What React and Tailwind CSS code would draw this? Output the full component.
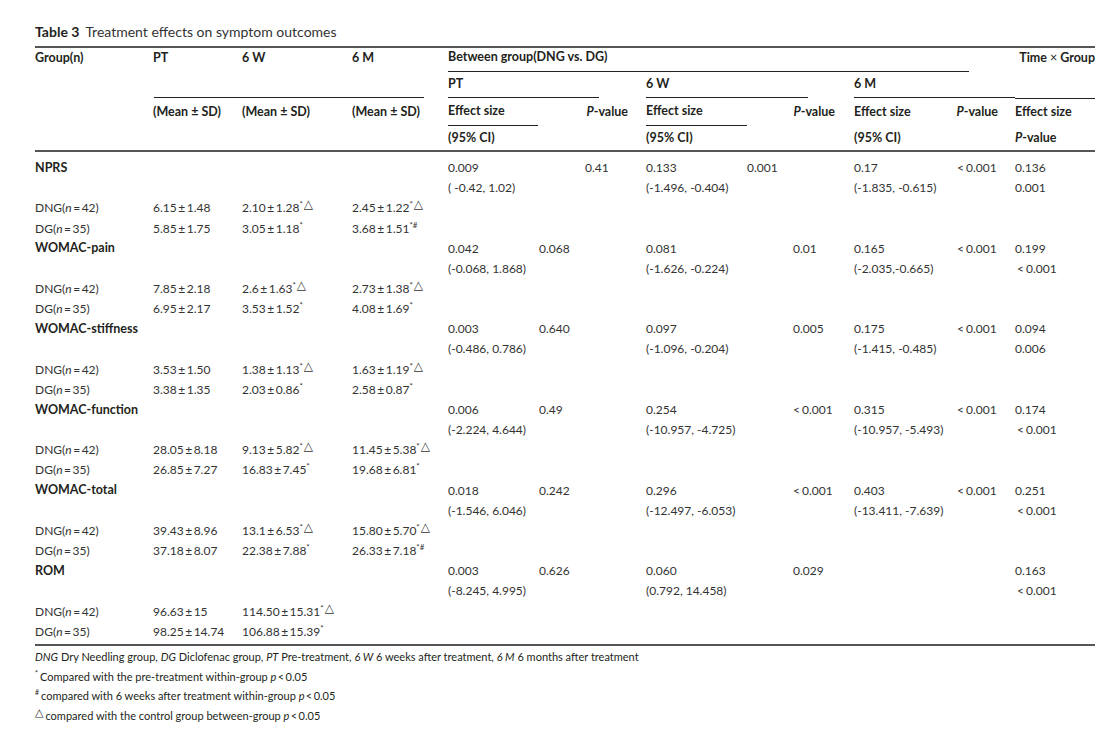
import React from "react";

const G =
  "grid grid-cols-[118px_89px_110px_96px_91px_46px_61px_101px_46px_61px_101px_60px_80px]";

function Sup({ s }) {
  if (!s) return null;
  return (
    <span className="inline-flex items-start">
      {s.split("").map((c, i) =>
        c === "△" ? (
          <span
            key={i}
            className="relative -top-[7px] ml-[1px] text-[12px] leading-none font-['DejaVu_Sans',sans-serif]"
          >
            △
          </span>
        ) : (
          <span key={i} className="relative -top-[5px] text-[8px] leading-none">
            {c}
          </span>
        )
      )}
    </span>
  );
}

function Lt({ v }) {
  if (v && v.startsWith("<")) {
    return (
      <span>
        {"<"}
        <span className="ml-[2px]">{v.slice(1)}</span>
      </span>
    );
  }
  return <span>{v}</span>;
}

const pm = (a, b) => `${a}\u2009±\u2009${b}`;

const cats = [
  {
    name: "NPRS",
    pt: ["0.009", "( -0.42, 1.02)"],
    ptP: "0.41",
    ptPc: "col-start-7",
    w: ["0.133", "(-1.496, -0.404)"],
    wP: "0.001",
    wPc: "col-start-9",
    m: ["0.17", "(-1.835, -0.615)"],
    mP: "<0.001",
    t: ["0.136", "0.001"],
    dng: [pm("6.15", "1.48"), [pm("2.10", "1.28"), "*△"], [pm("2.45", "1.22"), "*△"]],
    dg: [pm("5.85", "1.75"), [pm("3.05", "1.18"), "*"], [pm("3.68", "1.51"), "*#"]],
  },
  {
    name: "WOMAC-pain",
    pt: ["0.042", "(-0.068, 1.868)"],
    ptP: "0.068",
    ptPc: "col-start-6",
    w: ["0.081", "(-1.626, -0.224)"],
    wP: "0.01",
    wPc: "col-start-10",
    m: ["0.165", "(-2.035,-0.665)"],
    mP: "<0.001",
    t: ["0.199", "<0.001"],
    dng: [pm("7.85", "2.18"), [pm("2.6", "1.63"), "*△"], [pm("2.73", "1.38"), "*△"]],
    dg: [pm("6.95", "2.17"), [pm("3.53", "1.52"), "*"], [pm("4.08", "1.69"), "*"]],
  },
  {
    name: "WOMAC-stiffness",
    pt: ["0.003", "(-0.486, 0.786)"],
    ptP: "0.640",
    ptPc: "col-start-6",
    w: ["0.097", "(-1.096, -0.204)"],
    wP: "0.005",
    wPc: "col-start-10",
    m: ["0.175", "(-1.415, -0.485)"],
    mP: "<0.001",
    t: ["0.094", "0.006"],
    dng: [pm("3.53", "1.50"), [pm("1.38", "1.13"), "*△"], [pm("1.63", "1.19"), "*△"]],
    dg: [pm("3.38", "1.35"), [pm("2.03", "0.86"), "*"], [pm("2.58", "0.87"), "*"]],
  },
  {
    name: "WOMAC-function",
    pt: ["0.006", "(-2.224, 4.644)"],
    ptP: "0.49",
    ptPc: "col-start-6",
    w: ["0.254", "(-10.957, -4.725)"],
    wP: "<0.001",
    wPc: "col-start-10",
    m: ["0.315", "(-10.957, -5.493)"],
    mP: "<0.001",
    t: ["0.174", "<0.001"],
    dng: [pm("28.05", "8.18"), [pm("9.13", "5.82"), "*△"], [pm("11.45", "5.38"), "*△"]],
    dg: [pm("26.85", "7.27"), [pm("16.83", "7.45"), "*"], [pm("19.68", "6.81"), "*"]],
  },
  {
    name: "WOMAC-total",
    pt: ["0.018", "(-1.546, 6.046)"],
    ptP: "0.242",
    ptPc: "col-start-6",
    w: ["0.296", "(-12.497, -6.053)"],
    wP: "<0.001",
    wPc: "col-start-10",
    m: ["0.403", "(-13.411, -7.639)"],
    mP: "<0.001",
    t: ["0.251", "<0.001"],
    dng: [pm("39.43", "8.96"), [pm("13.1", "6.53"), "*△"], [pm("15.80", "5.70"), "*△"]],
    dg: [pm("37.18", "8.07"), [pm("22.38", "7.88"), "*"], [pm("26.33", "7.18"), "*#"]],
  },
  {
    name: "ROM",
    pt: ["0.003", "(-8.245, 4.995)"],
    ptP: "0.626",
    ptPc: "col-start-6",
    w: ["0.060", "(0.792, 14.458)"],
    wP: "0.029",
    wPc: "col-start-10",
    m: null,
    mP: null,
    t: ["0.163", "<0.001"],
    dng: [pm("96.63", "15"), [pm("114.50", "15.31"), "*△"], null],
    dg: [pm("98.25", "14.74"), [pm("106.88", "15.39"), "*"], null],
  },
];

const ROW = G + " h-[20.17px] items-center text-[12px] text-[#333] whitespace-nowrap";

function GroupLabel({ g, n }) {
  return (
    <span>
      {g}(<i>n</i>
      {"\u2009=\u2009"}
      {n})
    </span>
  );
}

function MeanRow({ label, n, vals }) {
  return (
    <div className={ROW}>
      <div className="col-start-1">
        <GroupLabel g={label} n={n} />
      </div>
      <div className="col-start-2">{vals[0]}</div>
      <div className="col-start-3">
        {vals[1] && (
          <span>
            {vals[1][0]}
            <Sup s={vals[1][1]} />
          </span>
        )}
      </div>
      <div className="col-start-4">
        {vals[2] && (
          <span>
            {vals[2][0]}
            <Sup s={vals[2][1]} />
          </span>
        )}
      </div>
    </div>
  );
}

function Category({ c }) {
  return (
    <>
      <div className={ROW}>
        <div className="col-start-1 font-bold text-[12.5px] text-[#231f20]">{c.name}</div>
        <div className="col-start-5">{c.pt[0]}</div>
        <div className={c.ptPc}>{c.ptP}</div>
        <div className="col-start-8">{c.w[0]}</div>
        <div className={c.wPc}>
          <Lt v={c.wP} />
        </div>
        {c.m && <div className="col-start-11">{c.m[0]}</div>}
        {c.mP && (
          <div className="col-start-12 pl-[2px]">
            <Lt v={c.mP} />
          </div>
        )}
        <div className="col-start-13">{c.t[0]}</div>
      </div>
      <div className={ROW}>
        <div className="col-start-5">{c.pt[1]}</div>
        <div className="col-start-8">{c.w[1]}</div>
        {c.m && <div className="col-start-11">{c.m[1]}</div>}
        <div className={"col-start-13" + (c.t[1].startsWith("<") ? " pl-[2px]" : "")}>
          <Lt v={c.t[1]} />
        </div>
      </div>
      <MeanRow label="DNG" n="42" vals={c.dng} />
      <MeanRow label="DG" n="35" vals={c.dg} />
    </>
  );
}

export default function App() {
  return (
    <div className="w-[1107px] h-[733px] overflow-hidden bg-white text-[#231f20] font-['Lato','Liberation_Sans',sans-serif]">
      <div className="ml-[35px] w-[1060px] pt-[22px]">
        <div className="h-[18px] flex items-center text-[14px] whitespace-nowrap">
          <span className="font-bold">Table 3</span>
          <span className="ml-[6px] text-[#333]">Treatment effects on symptom outcomes</span>
        </div>
        <div className="mt-[6px] border-t-2 border-[#555]" />

        {/* header row 1 */}
        <div className={G + " h-[24px] text-[12.5px] font-bold whitespace-nowrap"}>
          <div className="col-start-1 flex items-center pb-[4px]">Group(n)</div>
          <div className="col-start-2 flex items-center pb-[4px]">PT</div>
          <div className="col-start-3 flex items-center pb-[4px]">6 W</div>
          <div className="col-start-4 flex items-center pb-[4px]">6 M</div>
          <div className="col-start-5 col-span-8">
            <div className="w-[521px] h-full border-b border-[#222] flex items-center pb-[4px]">
              Between group(DNG vs. DG)
            </div>
          </div>
          <div className="col-start-13 flex items-center justify-end pb-[4px]">
            Time <span className="font-normal mx-[3px]">×</span> Group
          </div>
        </div>

        {/* header row 2 */}
        <div className={G + " h-[26px] text-[12.5px] font-bold whitespace-nowrap"}>
          <div className="col-start-2 col-span-3">
            <div className="ml-[1px] w-[270px] h-full border-b border-[#222]" />
          </div>
          <div className="col-start-5 col-span-3">
            <div className="w-[151px] h-full border-b border-[#222] flex items-center">PT</div>
          </div>
          <div className="col-start-8 col-span-3">
            <div className="w-[162px] h-full border-b border-[#222] flex items-center">6 W</div>
          </div>
          <div className="col-start-11 col-span-2 border-b border-[#222] flex items-center">6 M</div>
          <div className="col-start-13 border-b border-[#222] translate-y-[1px]" />
        </div>

        {/* header row 3 */}
        <div className={G + " h-[28px] text-[12.5px] font-bold whitespace-nowrap"}>
          <div className="col-start-2 flex items-center">(Mean ± SD)</div>
          <div className="col-start-3 flex items-center">(Mean ± SD)</div>
          <div className="col-start-4 flex items-center">(Mean ± SD)</div>
          <div className="col-start-5">
            <div className="w-[90px] h-full border-b border-[#222] flex items-center">Effect size</div>
          </div>
          <div className="col-start-6 col-span-2 flex items-center justify-end pr-[18px]">
            <i>P</i>-value
          </div>
          <div className="col-start-8 border-b border-[#222] flex items-center">Effect size</div>
          <div className="col-start-9 col-span-2 flex items-center justify-end pr-[19px]">
            <i>P</i>-value
          </div>
          <div className="col-start-11 flex items-center">Effect size</div>
          <div className="col-start-12 flex items-center justify-end pr-[17px]">
            <i>P</i>-value
          </div>
          <div className="col-start-13 flex items-center">Effect size</div>
        </div>

        {/* header row 4 */}
        <div className={G + " h-[24px] text-[12.5px] font-bold whitespace-nowrap items-center"}>
          <div className="col-start-5">(95% CI)</div>
          <div className="col-start-8">(95% CI)</div>
          <div className="col-start-11">(95% CI)</div>
          <div className="col-start-13">
            <i>P</i>-value
          </div>
        </div>
        <div className="border-t-2 border-[#555]" />

        {/* body */}
        <div className="pt-[6px]">
          {cats.map((c) => (
            <Category key={c.name} c={c} />
          ))}
        </div>
        <div className="mt-[2px] border-t-2 border-[#555]" />

        {/* footnotes */}
        <div className="pt-[2px] text-[11px] text-[#231f20] whitespace-nowrap">
          <div className="h-[19.5px] flex items-center">
            <span>
              <i>DNG</i> Dry Needling group, <i>DG</i> Diclofenac group, <i>PT</i> Pre-treatment,{" "}
              <i>6 W</i> 6 weeks after treatment, <i>6 M</i> 6 months after treatment
            </span>
          </div>
          <div className="h-[19.5px] flex items-center">
            <span className="relative -top-[4px] text-[7px] mr-[2px]">*</span>
            <span>
              Compared with the pre-treatment within-group <i>p</i>
              {"\u2009<\u2009"}0.05
            </span>
          </div>
          <div className="h-[19.5px] flex items-center">
            <span className="relative -top-[4px] text-[7px] mr-[2px]">#</span>
            <span>
              compared with 6 weeks after treatment within-group <i>p</i>
              {"\u2009<\u2009"}0.05
            </span>
          </div>
          <div className="h-[19.5px] flex items-center">
            <span className="relative -top-[3px] text-[11px] mr-[2px] font-['DejaVu_Sans',sans-serif]">
              △
            </span>
            <span>
              compared with the control group between-group <i>p</i>
              {"\u2009<\u2009"}0.05
            </span>
          </div>
        </div>
      </div>
    </div>
  );
}
